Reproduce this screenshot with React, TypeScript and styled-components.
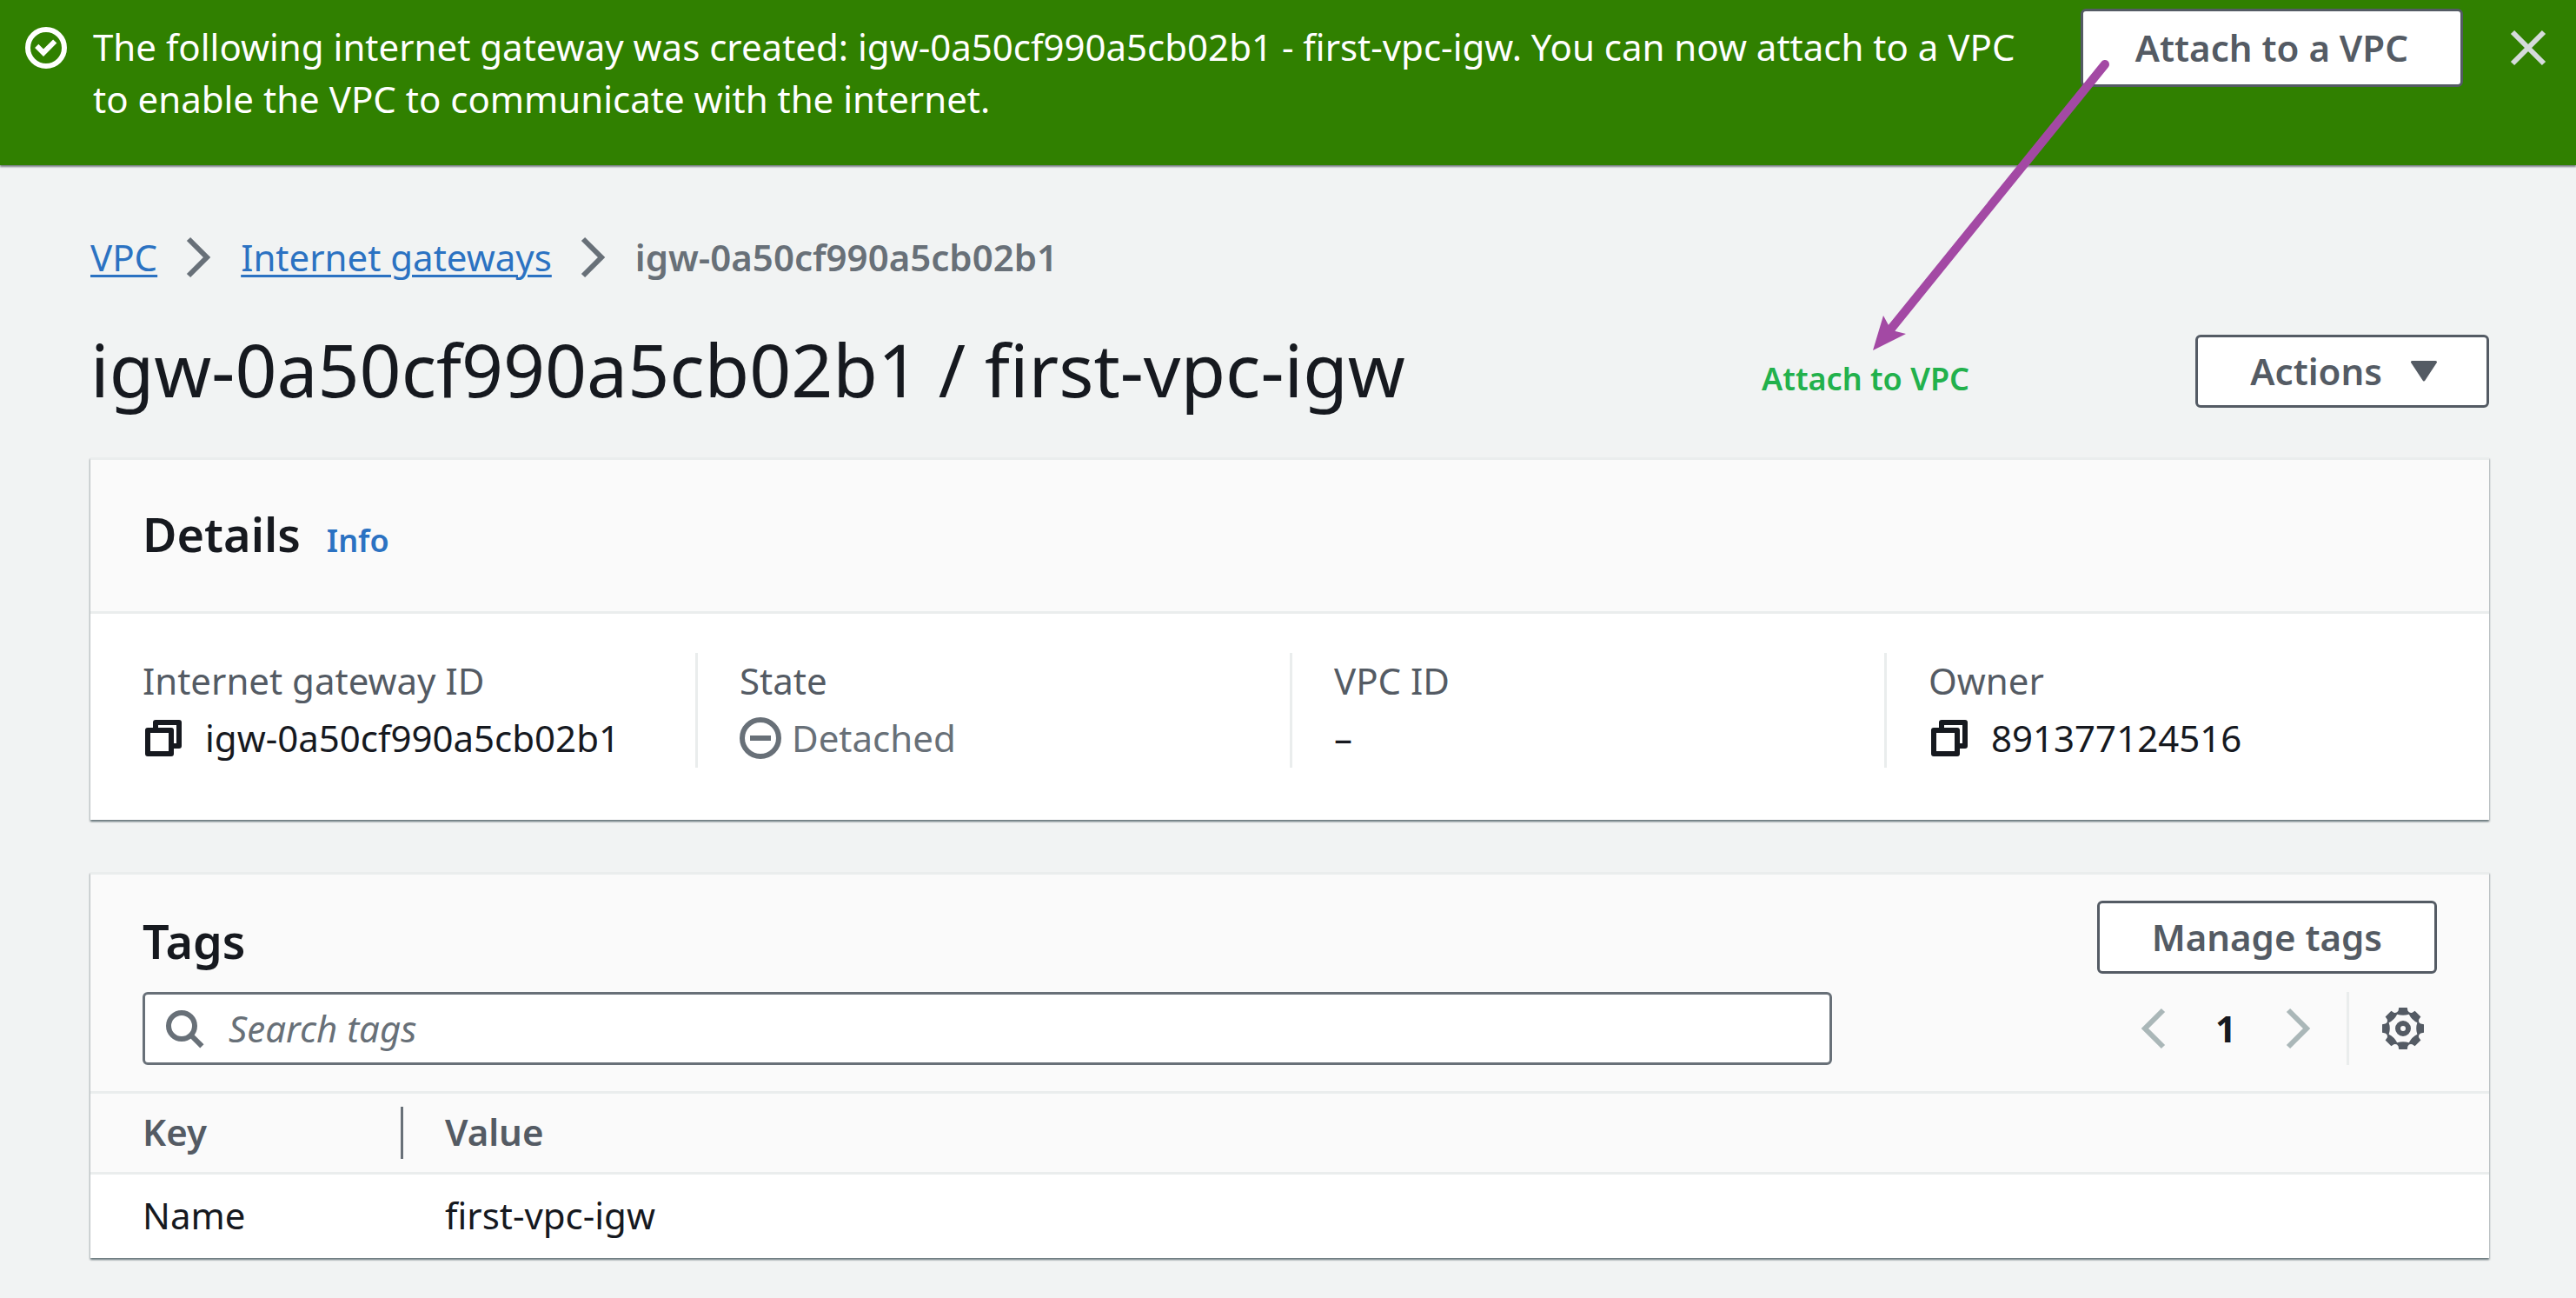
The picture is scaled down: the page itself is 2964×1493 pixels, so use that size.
import React from "react";
import styled, { createGlobalStyle, css } from "styled-components";

const color = {
  page: "#f1f3f3",
  text: "#16191f",
  label: "#545b64",
  muted: "#687078",
  disabled: "#aab7b8",
  line: "#eaeded",
  head: "#fafafa",
  link: "#2b72c2",
  success: "#308000",
};

const strong = 650;

const GlobalStyle = createGlobalStyle`
  *, *::before, *::after { box-sizing: border-box; }
  body {
    margin: 0;
    background: ${color.page};
    color: ${color.text};
    font-family: "Noto Sans", "Open Sans", sans-serif;
    font-size: 42px;
    line-height: 60px;
  }
`;

const Page = styled.div`
  position: relative;
`;

const Icon = styled.svg`
  display: block;
  flex: none;
  width: 48px;
  height: 48px;
  fill: none;
  stroke: currentColor;
  stroke-width: 2;
`;

const Flash = styled.section`
  display: flex;
  align-items: flex-start;
  min-height: 190px;
  padding: 10px 31px 24px 29px;
  background: ${color.success};
  color: #fff;
  box-shadow: 0 2px 2px rgba(0, 7, 22, 0.5);
`;

const FlashIcon = styled.span`
  margin: 21px 30px 0 0;
`;

const FlashText = styled.p`
  flex: 1;
  max-width: 2240px;
  margin: 14px 0 0;
`;

const FlashActions = styled.div`
  display: flex;
  align-items: center;
  gap: 51px;
  margin-left: auto;
`;

const Button = styled.button<{ $tall?: boolean; $menu?: boolean }>`
  display: inline-flex;
  align-items: center;
  justify-content: center;
  gap: 24px;
  flex: none;
  height: ${(p) => (p.$tall ? 90 : 84)}px;
  padding: 0 ${(p) => (p.$menu ? 48 : 60)}px 0 60px;
  border: 3px solid ${color.label};
  border-radius: 6px;
  background: #fff;
  color: ${color.label};
  font: inherit;
  font-weight: ${strong};
  white-space: nowrap;
`;

const IconButton = styled.button<{ $tone?: string }>`
  display: flex;
  padding: 0;
  border: 0;
  background: none;
  color: ${(p) => p.$tone ?? "inherit"};
`;

const Main = styled.main`
  padding: 76px 100px 46px 104px;
`;

const Crumbs = styled.nav`
  display: flex;
  align-items: center;
  gap: 24px;
  color: ${color.muted};
`;

const Crumb = styled.a`
  color: ${color.link};
  text-decoration: underline;
  text-decoration-thickness: 3px;
  text-underline-offset: 4px;
`;

const CurrentCrumb = styled.span`
  font-weight: ${strong};
`;

const TitleRow = styled.header`
  display: flex;
  align-items: flex-start;
  justify-content: space-between;
  margin: 45px 0 47px;

  ${Button} {
    margin-top: 14px;
  }
`;

const Title = styled.h1`
  margin: 0;
  font-size: 84px;
  font-weight: 400;
  line-height: 108px;
`;

const Panel = styled.section`
  border-top: 3px solid ${color.line};
  background: #fff;
  box-shadow:
    0 2px 2px rgba(0, 28, 36, 0.4),
    1px 2px 2px rgba(0, 28, 36, 0.15),
    -1px 2px 2px rgba(0, 28, 36, 0.15);

  & + & {
    margin-top: 60px;
  }
`;

const panelBar = css`
  background: ${color.head};
  border-bottom: 3px solid ${color.line};
`;

const PanelHeader = styled.div`
  ${panelBar}
  display: flex;
  align-items: baseline;
  gap: 30px;
  padding: 52px 60px 56px;
`;

const PanelTitle = styled.h2`
  margin: 0;
  font-size: 54px;
  font-weight: ${strong};
  line-height: 66px;
`;

const InfoLink = styled.a`
  color: ${color.link};
  font-size: 36px;
  font-weight: ${strong};
  line-height: 48px;
  text-decoration: none;
`;

const Facts = styled.dl`
  display: grid;
  grid-template-columns: repeat(4, minmax(0, 1fr));
  margin: 0;
  padding: 45px 12px 60px;
`;

const Fact = styled.div`
  padding: 2px 48px 4px;

  & + & {
    border-left: 3px solid ${color.line};
  }
`;

const FactLabel = styled.dt`
  margin-bottom: 6px;
  color: ${color.label};
`;

const FactValue = styled.dd<{ $muted?: boolean }>`
  display: flex;
  align-items: center;
  gap: ${(p) => (p.$muted ? 12 : 24)}px;
  margin: 0;
  color: ${(p) => (p.$muted ? color.muted : "inherit")};
`;

const Tools = styled.div`
  ${panelBar}
  display: grid;
  gap: 21px;
  padding: 30px 60px;
`;

const ToolRow = styled.div<{ $align: string }>`
  display: flex;
  align-items: ${(p) => p.$align};
  justify-content: space-between;
`;

const TagsTitle = styled(PanelTitle)`
  margin-top: 13px;
`;

const Search = styled.label`
  display: flex;
  align-items: center;
  gap: 27px;
  flex: 1;
  height: 84px;
  margin-right: 345px;
  padding: 0 21px;
  border: 3px solid ${color.muted};
  border-radius: 6px;
  background: #fff;
  color: ${color.muted};
`;

const SearchInput = styled.input`
  flex: 1;
  min-width: 0;
  padding: 0;
  border: 0;
  outline: 0;
  background: none;
  color: ${color.text};
  font: inherit;

  &::placeholder {
    color: ${color.muted};
    font-style: italic;
    opacity: 1;
  }
`;

const Pager = styled.div`
  display: flex;
  align-items: center;
  gap: 48px;
  padding-right: 31px;
`;

const PageNumber = styled.span`
  width: 24px;
  font-weight: 700;
  text-align: center;
`;

const Preferences = styled.div`
  display: flex;
  align-items: center;
  height: 84px;
  padding: 0 15px 0 38px;
  border-left: 3px solid ${color.line};
`;

const Table = styled.table`
  width: 100%;
  border-collapse: collapse;
  text-align: left;
`;

const HeadCell = styled.th`
  ${panelBar}
  position: relative;
  padding: 14px 48px 16px;
  color: ${color.label};
  font-weight: ${strong};

  &:first-child {
    width: 360px;
    padding-left: 60px;
  }

  &:first-child::after {
    content: "";
    position: absolute;
    top: 15px;
    right: 0;
    bottom: 15px;
    width: 3px;
    background: ${color.muted};
  }
`;

const Cell = styled.td`
  padding: 17px 48px 19px;

  &:first-child {
    padding-left: 60px;
  }
`;

const NoteArrow = styled.svg`
  position: absolute;
  top: 60px;
  right: 524px;
  width: 300px;
  height: 350px;
  pointer-events: none;
`;

const NoteText = styled.span`
  position: absolute;
  top: 406px;
  right: 698px;
  color: #22b14c;
  font-size: 36px;
  font-weight: ${strong};
  white-space: nowrap;
`;

const CopyIcon = () => (
  <Icon viewBox="0 0 16 16" strokeLinejoin="round">
    <path d="M2 5h9v9H2z" />
    <path d="M5 5V2h9v9h-3" />
  </Icon>
);

const Chevron = ({ left = false }: { left?: boolean }) => (
  <Icon viewBox="0 0 16 16">
    <path d={left ? "M12 1L5 8l7 7" : "M4 1l7 7-7 7"} />
  </Icon>
);

// A point on the cog, given across and outward from the centre in a frame turned by `deg`.
const cogPoint = (deg: number, across: number, out: number) => {
  const a = (deg * Math.PI) / 180;
  const x = 8 + across * Math.cos(a) + out * Math.sin(a);
  const y = 8 + across * Math.sin(a) - out * Math.cos(a);
  return `${x.toFixed(2)} ${y.toFixed(2)}`;
};

const teeth = [0, 45, 90, 135, 180, 225, 270, 315];

const cogOuter = teeth
  .map((d, i) => {
    const start = `${i ? "L" : "M"}${cogPoint(d, -1.8, 6.8)}`;
    const top = `L${cogPoint(d, -1.6, 8)}L${cogPoint(d, 1.6, 8)}L${cogPoint(d, 1.8, 6.8)}`;
    return `${start}${top}Q${cogPoint(d + 22.5, 0, 6.2)} ${cogPoint(d + 45, -1.8, 6.8)}`;
  })
  .join("");

const cogInner = teeth
  .map((d, i) => `${i ? "" : `M${cogPoint(-22.5, 0, 5.9)}`}Q${cogPoint(d, 0, 4.7)} ${cogPoint(d + 22.5, 0, 5.9)}`)
  .join("");

const GearIcon = () => (
  <Icon viewBox="0 0 16 16">
    <path d={`${cogOuter}Z${cogInner}Z`} fill="currentColor" fillRule="evenodd" stroke="none" />
    <circle cx="8" cy="8" r="2" />
  </Icon>
);

export default function App() {
  return (
    <>
      <GlobalStyle />
      <Page>
        <Flash>
          <FlashIcon>
            <Icon viewBox="0 0 16 16">
              <circle cx="8" cy="8" r="7" />
              <path d="M4.400 7.300L7 9.900l4.400-4.400" />
            </Icon>
          </FlashIcon>
          <FlashText>
            The following internet gateway was created: igw-0a50cf990a5cb02b1 - first-vpc-igw. You can now attach to a
            VPC to enable the VPC to communicate with the internet.
          </FlashText>
          <FlashActions>
            <Button $tall>Attach to a VPC</Button>
            <IconButton aria-label="Dismiss" $tone="#d5dbdb">
              <Icon viewBox="0 0 16 16">
                <path d="M2 2l12 12M14 2L2 14" />
              </Icon>
            </IconButton>
          </FlashActions>
        </Flash>

        <Main>
          <Crumbs aria-label="Breadcrumbs">
            <Crumb href="#vpc">VPC</Crumb>
            <Chevron />
            <Crumb href="#gateways">Internet gateways</Crumb>
            <Chevron />
            <CurrentCrumb>igw-0a50cf990a5cb02b1</CurrentCrumb>
          </Crumbs>

          <TitleRow>
            <Title>igw-0a50cf990a5cb02b1 / first-vpc-igw</Title>
            <Button $menu>
              Actions
              <Icon viewBox="0 0 16 16">
                <path d="M3.500 4.500h9L8 11.300z" fill="currentColor" strokeWidth="1" strokeLinejoin="round" />
              </Icon>
            </Button>
          </TitleRow>

          <Panel>
            <PanelHeader>
              <PanelTitle>Details</PanelTitle>
              <InfoLink href="#info">Info</InfoLink>
            </PanelHeader>
            <Facts>
              <Fact>
                <FactLabel>Internet gateway ID</FactLabel>
                <FactValue>
                  <CopyIcon />
                  igw-0a50cf990a5cb02b1
                </FactValue>
              </Fact>
              <Fact>
                <FactLabel>State</FactLabel>
                <FactValue $muted>
                  <Icon viewBox="0 0 16 16">
                    <circle cx="8" cy="8" r="7" />
                    <path d="M4 8h8" />
                  </Icon>
                  Detached
                </FactValue>
              </Fact>
              <Fact>
                <FactLabel>VPC ID</FactLabel>
                <FactValue>–</FactValue>
              </Fact>
              <Fact>
                <FactLabel>Owner</FactLabel>
                <FactValue>
                  <CopyIcon />
                  891377124516
                </FactValue>
              </Fact>
            </Facts>
          </Panel>

          <Panel>
            <Tools>
              <ToolRow $align="flex-start">
                <TagsTitle>Tags</TagsTitle>
                <Button>Manage tags</Button>
              </ToolRow>
              <ToolRow $align="center">
                <Search>
                  <Icon viewBox="0 0 16 16">
                    <circle cx="7" cy="7" r="5" />
                    <path d="M10.500 10.500l4.300 4.300" />
                  </Icon>
                  <SearchInput type="text" placeholder="Search tags" aria-label="Search tags" />
                </Search>
                <Pager>
                  <IconButton aria-label="Previous page" $tone={color.disabled}>
                    <Chevron left />
                  </IconButton>
                  <PageNumber>1</PageNumber>
                  <IconButton aria-label="Next page" $tone={color.disabled}>
                    <Chevron />
                  </IconButton>
                </Pager>
                <Preferences>
                  <IconButton aria-label="Preferences" $tone={color.label}>
                    <GearIcon />
                  </IconButton>
                </Preferences>
              </ToolRow>
            </Tools>
            <Table>
              <thead>
                <tr>
                  <HeadCell scope="col">Key</HeadCell>
                  <HeadCell scope="col">Value</HeadCell>
                </tr>
              </thead>
              <tbody>
                <tr>
                  <Cell>Name</Cell>
                  <Cell>first-vpc-igw</Cell>
                </tr>
              </tbody>
            </Table>
          </Panel>
        </Main>

        <NoteArrow viewBox="0 0 300 350" aria-hidden="true">
          <path d="M282 14L36 318" fill="none" stroke="#a349a4" strokeWidth="10" strokeLinecap="round" />
          <path d="M15 343l12-40 6 11 8 7 12 3z" fill="#a349a4" />
        </NoteArrow>
        <NoteText>Attach to VPC</NoteText>
      </Page>
    </>
  );
}
